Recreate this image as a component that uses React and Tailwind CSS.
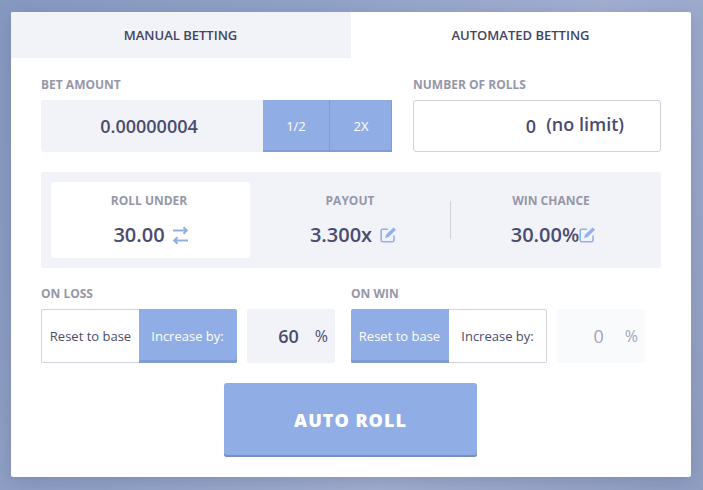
const TABS = ['MANUAL BETTING', 'AUTOMATED BETTING']

function SwapIcon() {
  return (
    <svg className="w-4 h-[18px]" viewBox="0 0 16 18" fill="none" stroke="#91afe6" strokeWidth="2">
      <path d="M1 4.5H15M11.5 1.2L14.8 4.5L11.5 7.8M16 14.5H2M5.5 11.2L2.2 14.5L5.5 17.8" />
    </svg>
  )
}

function EditIcon() {
  return (
    <svg className="w-4 h-4 shrink-0" viewBox="0 0 16 16" fill="none" stroke="#91b2ec" strokeWidth="1.6">
      <path d="M7.5 2.2H2.6Q1.2 2.2 1.2 3.6V13.2Q1.2 14.8 2.6 14.8H12.6Q14 14.8 14 13.2V9" strokeLinecap="round" />
      <path d="M5 11.2L6.2 7.6L13.6 0.5L16 2.8L8.7 10Z" fill="#91b2ec" stroke="none" />
    </svg>
  )
}

function Label({ children }) {
  return <div className="h-[15px] text-xs leading-[15px] font-bold text-[#9597a9]">{children}</div>
}

function Strategy({ title, active, value, disabled }) {
  return (
    <div className="w-[310px]">
      <Label>{title}</Label>
      <div className="mt-2 flex h-[54px]">
        {['Reset to base', 'Increase by:'].map((option, i) => (
          <button
            key={option}
            className={`w-[98px] pt-px text-[13px] whitespace-nowrap ${i === 0 ? 'rounded-l-xs' : 'rounded-r-xs'} ${
              active === option
                ? 'bg-[#90aee5] pr-px font-medium text-white shadow-[inset_0_-3px_0_#819dd0]'
                : `border border-[#d1d1e0] text-[#494c6e] ${i === 0 ? 'border-r-0' : 'border-l-0'}`
            }`}
          >
            {option}
          </button>
        ))}
        <div
          className={`ml-2.5 flex w-[88px] items-center justify-end rounded-[3px] pr-[7px] ${
            disabled ? 'bg-[#f9fafc] text-[#a5a5b8]' : 'bg-[#f2f3f8] text-[#494c70]'
          }`}
        >
          <span className={`text-lg ${disabled ? 'mr-[21px] font-medium' : 'mr-4 font-semibold'}`}>{value}</span>
          <span className="text-base font-medium">%</span>
        </div>
      </div>
    </div>
  )
}

export default function App() {
  return (
    <div
      className="h-[490px] w-[703px] overflow-hidden bg-[linear-gradient(115deg,#8799c1_0%,#93a2c7_35%,#a2afd0_65%,#929fc3_100%)] px-[11px] pt-3 font-['Open_Sans',sans-serif] text-[#494c70]"
    >
      <div className="h-[465px] w-[680px] rounded-xs bg-white shadow-[0_5px_20px_rgba(60,75,120,0.25)]">
        <div className="flex h-[46px]">
          {TABS.map((tab, i) => (
            <button
              key={tab}
              className={`w-[340px] pt-px pr-px text-[13px] font-semibold text-[#414463] ${i === 0 ? 'rounded-tl-xs bg-[#f2f3f8]' : ''}`}
            >
              {tab}
            </button>
          ))}
        </div>

        <div className="px-[30px] pt-[19px]">
          <div className="flex justify-between">
            <div className="w-[351px]">
              <Label>BET AMOUNT</Label>
              <div className="mt-2 flex h-[52px]">
                <div className="flex w-[222px] items-center justify-center rounded-l-[3px] bg-[#f2f3f8] pr-1.5 text-lg font-semibold">
                  0.00000004
                </div>
                <button className="w-[67px] bg-[#90aee5] pt-px pr-px text-[13px] font-medium text-white shadow-[inset_-1px_-2px_0_#819dd0]">1/2</button>
                <button className="w-[62px] bg-[#90aee5] pt-px text-[13px] font-medium text-white shadow-[inset_-1px_-2px_0_#819dd0]">2X</button>
              </div>
            </div>
            <div className="w-[248px]">
              <Label>NUMBER OF ROLLS</Label>
              <div className="mt-2 flex h-[52px] items-center justify-end rounded-[3px] border border-[#d1d1e0] pr-9 text-lg font-semibold">
                <span className="mr-2.5">0</span>
                <span className="pb-1">(no limit)</span>
              </div>
            </div>
          </div>

          <div className="mt-5 flex h-24 items-center rounded-[3px] bg-[#f2f3f8] px-2.5 text-center text-xl font-semibold">
            <div className="h-[76px] w-[199px] rounded-[3px] bg-white pt-[11px] pr-[3px]">
              <Label>ROLL UNDER</Label>
              <div className="mt-[13px] flex items-center justify-center gap-[7px] pl-[3px] leading-7">
                30.00 <SwapIcon />
              </div>
            </div>
            <div className="h-[76px] w-[200px] pt-[11px]">
              <Label>PAYOUT</Label>
              <div className="mt-[13px] flex items-center justify-center gap-2 pl-1.5 leading-7">
                3.300x <EditIcon />
              </div>
            </div>
            <div className="h-[38px] w-px bg-[#d0d1da]" />
            <div className="h-[76px] w-[200px] pt-[11px]">
              <Label>WIN CHANCE</Label>
              <div className="mt-[13px] flex items-center justify-center pl-1 leading-7">
                30.00% <EditIcon />
              </div>
            </div>
          </div>

          <div className="mt-[18px] flex">
            <Strategy title="ON LOSS" active="Increase by:" value="60" />
            <Strategy title="ON WIN" active="Reset to base" value="0" disabled />
          </div>

          <button className="mt-5 ml-[183px] block h-[74px] w-[253px] rounded-[3px] bg-[#90aee5] text-lg font-extrabold tracking-[1px] text-white shadow-[inset_0_-2px_0_#748fc0]">
            AUTO ROLL
          </button>
        </div>
      </div>
    </div>
  )
}
